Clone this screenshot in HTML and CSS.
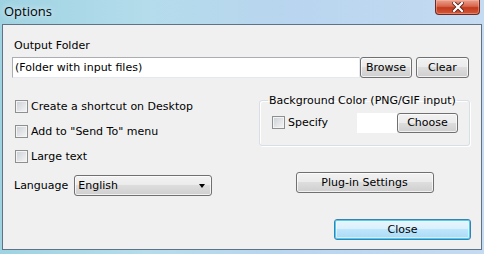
FILE: index.html
```html
<!DOCTYPE html>
<html lang="en">
<head>
    <meta charset="UTF-8">
    <title>Options</title>
    <link rel="stylesheet" href="styles.css">
</head>
<body>
    <div class="window">
        <div class="titlebar">
            <span class="title">Options</span>
            <span class="close-x">
                <svg width="12" height="10" viewBox="0 0 12 10">
                    <path d="M2 1 L10 9 M10 1 L2 9" stroke="#5a2418" stroke-width="4" stroke-linecap="square"/>
                    <path d="M2 1 L10 9 M10 1 L2 9" stroke="#fff" stroke-width="2.2" stroke-linecap="square"/>
                </svg>
            </span>
        </div>
        <div class="client">
            <div class="label out-label">Output Folder</div>
            <div class="folder-row">
                <input type="text" class="folder" value="(Folder with input files)">
                <button class="btn browse">Browse</button>
                <button class="btn clear">Clear</button>
            </div>
            <div class="mid">
                <div class="left-col">
                    <label class="check"><span class="box"></span>Create a shortcut on Desktop</label>
                    <label class="check"><span class="box"></span>Add to "Send To" menu</label>
                    <label class="check"><span class="box"></span>Large text</label>
                    <div class="lang-row">
                        <span class="label">Language</span>
                        <div class="combo">English<span class="arrow"></span></div>
                    </div>
                </div>
                <div class="right-col">
                    <fieldset class="group">
                        <legend>Background Color (PNG/GIF input)</legend>
                        <div class="group-row">
                            <label class="check"><span class="box"></span>Specify</label>
                            <span class="swatch"></span>
                            <button class="btn choose">Choose</button>
                        </div>
                    </fieldset>
                    <button class="btn plugin">Plug-in Settings</button>
                </div>
            </div>
            <div class="bottom-row">
                <button class="btn default">Close</button>
            </div>
        </div>
    </div>
</body>
</html>
```

FILE: styles.css
```css
body {
    margin: 0;
    font-family: Tahoma, "DejaVu Sans", sans-serif;
    font-size: 11px;
    color: #000;
}
.window {
    width: 484px;
    height: 254px;
    box-sizing: border-box;
    padding: 0 2px 4px 2px;
    background: linear-gradient(90deg, #9fd3e2 0%, #b4dceb 30%, #b9d5ef 60%, #c4dbf2 100%);
    display: flex;
    flex-direction: column;
}
.titlebar {
    height: 24px;
    position: relative;
    flex: none;
}
.title {
    position: absolute;
    left: 2px;
    top: 2px;
    font-family: "Open Sans", "DejaVu Sans", sans-serif;
    font-size: 13px;
    color: #000;
    text-shadow: 0 0 6px #fff;
}
.close-x {
    position: absolute;
    right: 2px;
    top: 0;
    width: 45px;
    height: 15px;
    box-sizing: border-box;
    border: 1px solid #6e2a22;
    border-top: none;
    border-radius: 0 0 4px 4px;
    background: linear-gradient(#eaa08e 0%, #d9664c 45%, #c23a1c 55%, #d4583a 100%);
    box-shadow: inset 0 0 0 1px rgba(255, 200, 180, 0.4);
    display: flex;
    align-items: center;
    justify-content: center;
}
.client {
    flex: 1;
    background: #f0f0f0;
    border: 1px solid #5f7386;
    padding: 14px 10px 0 9px;
    display: flex;
    flex-direction: column;
}
.label {
    line-height: 13px;
}
.out-label {
    margin-left: 2px;
}
.folder-row {
    display: flex;
    margin-top: 5px;
    height: 21px;
}
.folder {
    width: 348px;
    box-sizing: border-box;
    height: 21px;
    border: 1px solid #abadb3;
    border-right-color: #e3e9ef;
    border-bottom-color: #e3e9ef;
    padding: 0 2px;
    font: inherit;
    background: #fff;
    outline: none;
}
.btn {
    font: inherit;
    color: #000;
    height: 21px;
    box-sizing: border-box;
    border: 1px solid #707070;
    border-radius: 3px;
    padding: 0;
    background: linear-gradient(#f2f2f2 0%, #ebebeb 50%, #dddddd 50%, #cfcfcf 100%);
    box-shadow: inset 0 0 0 1px rgba(255, 255, 255, 0.7);
}
.browse {
    width: 52px;
    margin-left: 0;
}
.clear {
    width: 53px;
    margin-left: 4px;
}
.mid {
    display: flex;
    margin-top: 16px;
}
.left-col {
    width: 247px;
    display: flex;
    flex-direction: column;
}
.check {
    display: flex;
    align-items: center;
    height: 25px;
    margin-left: 3px;
}
.box {
    width: 13px;
    height: 13px;
    box-sizing: border-box;
    border: 1px solid #8e8f8f;
    background: linear-gradient(135deg, #cbcfd5 0%, #f6f6f6 100%);
    box-shadow: inset 0 0 0 1px #f4f4f4;
    margin-right: 3px;
}
.lang-row {
    display: flex;
    align-items: center;
    margin-top: 6px;
    margin-left: 2px;
}
.combo {
    margin-left: 6px;
    width: 138px;
    height: 21px;
    box-sizing: border-box;
    border: 1px solid #707070;
    border-radius: 3px;
    background: linear-gradient(#f2f2f2 0%, #ebebeb 50%, #dddddd 50%, #cfcfcf 100%);
    box-shadow: inset 0 0 0 1px rgba(255, 255, 255, 0.7);
    padding-left: 3px;
    line-height: 19px;
    position: relative;
}
.arrow {
    position: absolute;
    right: 6px;
    top: 8px;
    border-left: 3px solid transparent;
    border-right: 3px solid transparent;
    border-top: 4px solid #000;
}
.right-col {
    width: 211px;
    display: flex;
    flex-direction: column;
    align-items: center;
}
.group {
    margin: 0;
    width: 211px;
    box-sizing: border-box;
    border: 1px solid #d5dfe5;
    border-radius: 3px;
    box-shadow: inset 1px 1px 0 #fff, 1px 1px 0 #fff;
    padding: 3px 0 10px 12px;
}
.group legend {
    padding: 0 1px;
    margin-left: -4px;
    line-height: 13px;
}
.group-row {
    display: flex;
    align-items: center;
}
.group-row .check {
    margin-left: 0;
    width: 85px;
}
.swatch {
    width: 40px;
    height: 20px;
    background: #fff;
}
.choose {
    width: 61px;
    height: 20px;
}
.plugin {
    margin-top: 26px;
    width: 138px;
}
.bottom-row {
    display: flex;
    justify-content: flex-end;
    margin-top: 23px;
}
.default {
    width: 137px;
    border-color: #3c7fb1;
    background: linear-gradient(#eaf6fd 0%, #d9f0fc 50%, #bee6fd 50%, #a7d9f5 100%);
    box-shadow: inset 0 0 0 1px #48d0f0, inset 0 0 0 2px rgba(255, 255, 255, 0.5);
}
```
